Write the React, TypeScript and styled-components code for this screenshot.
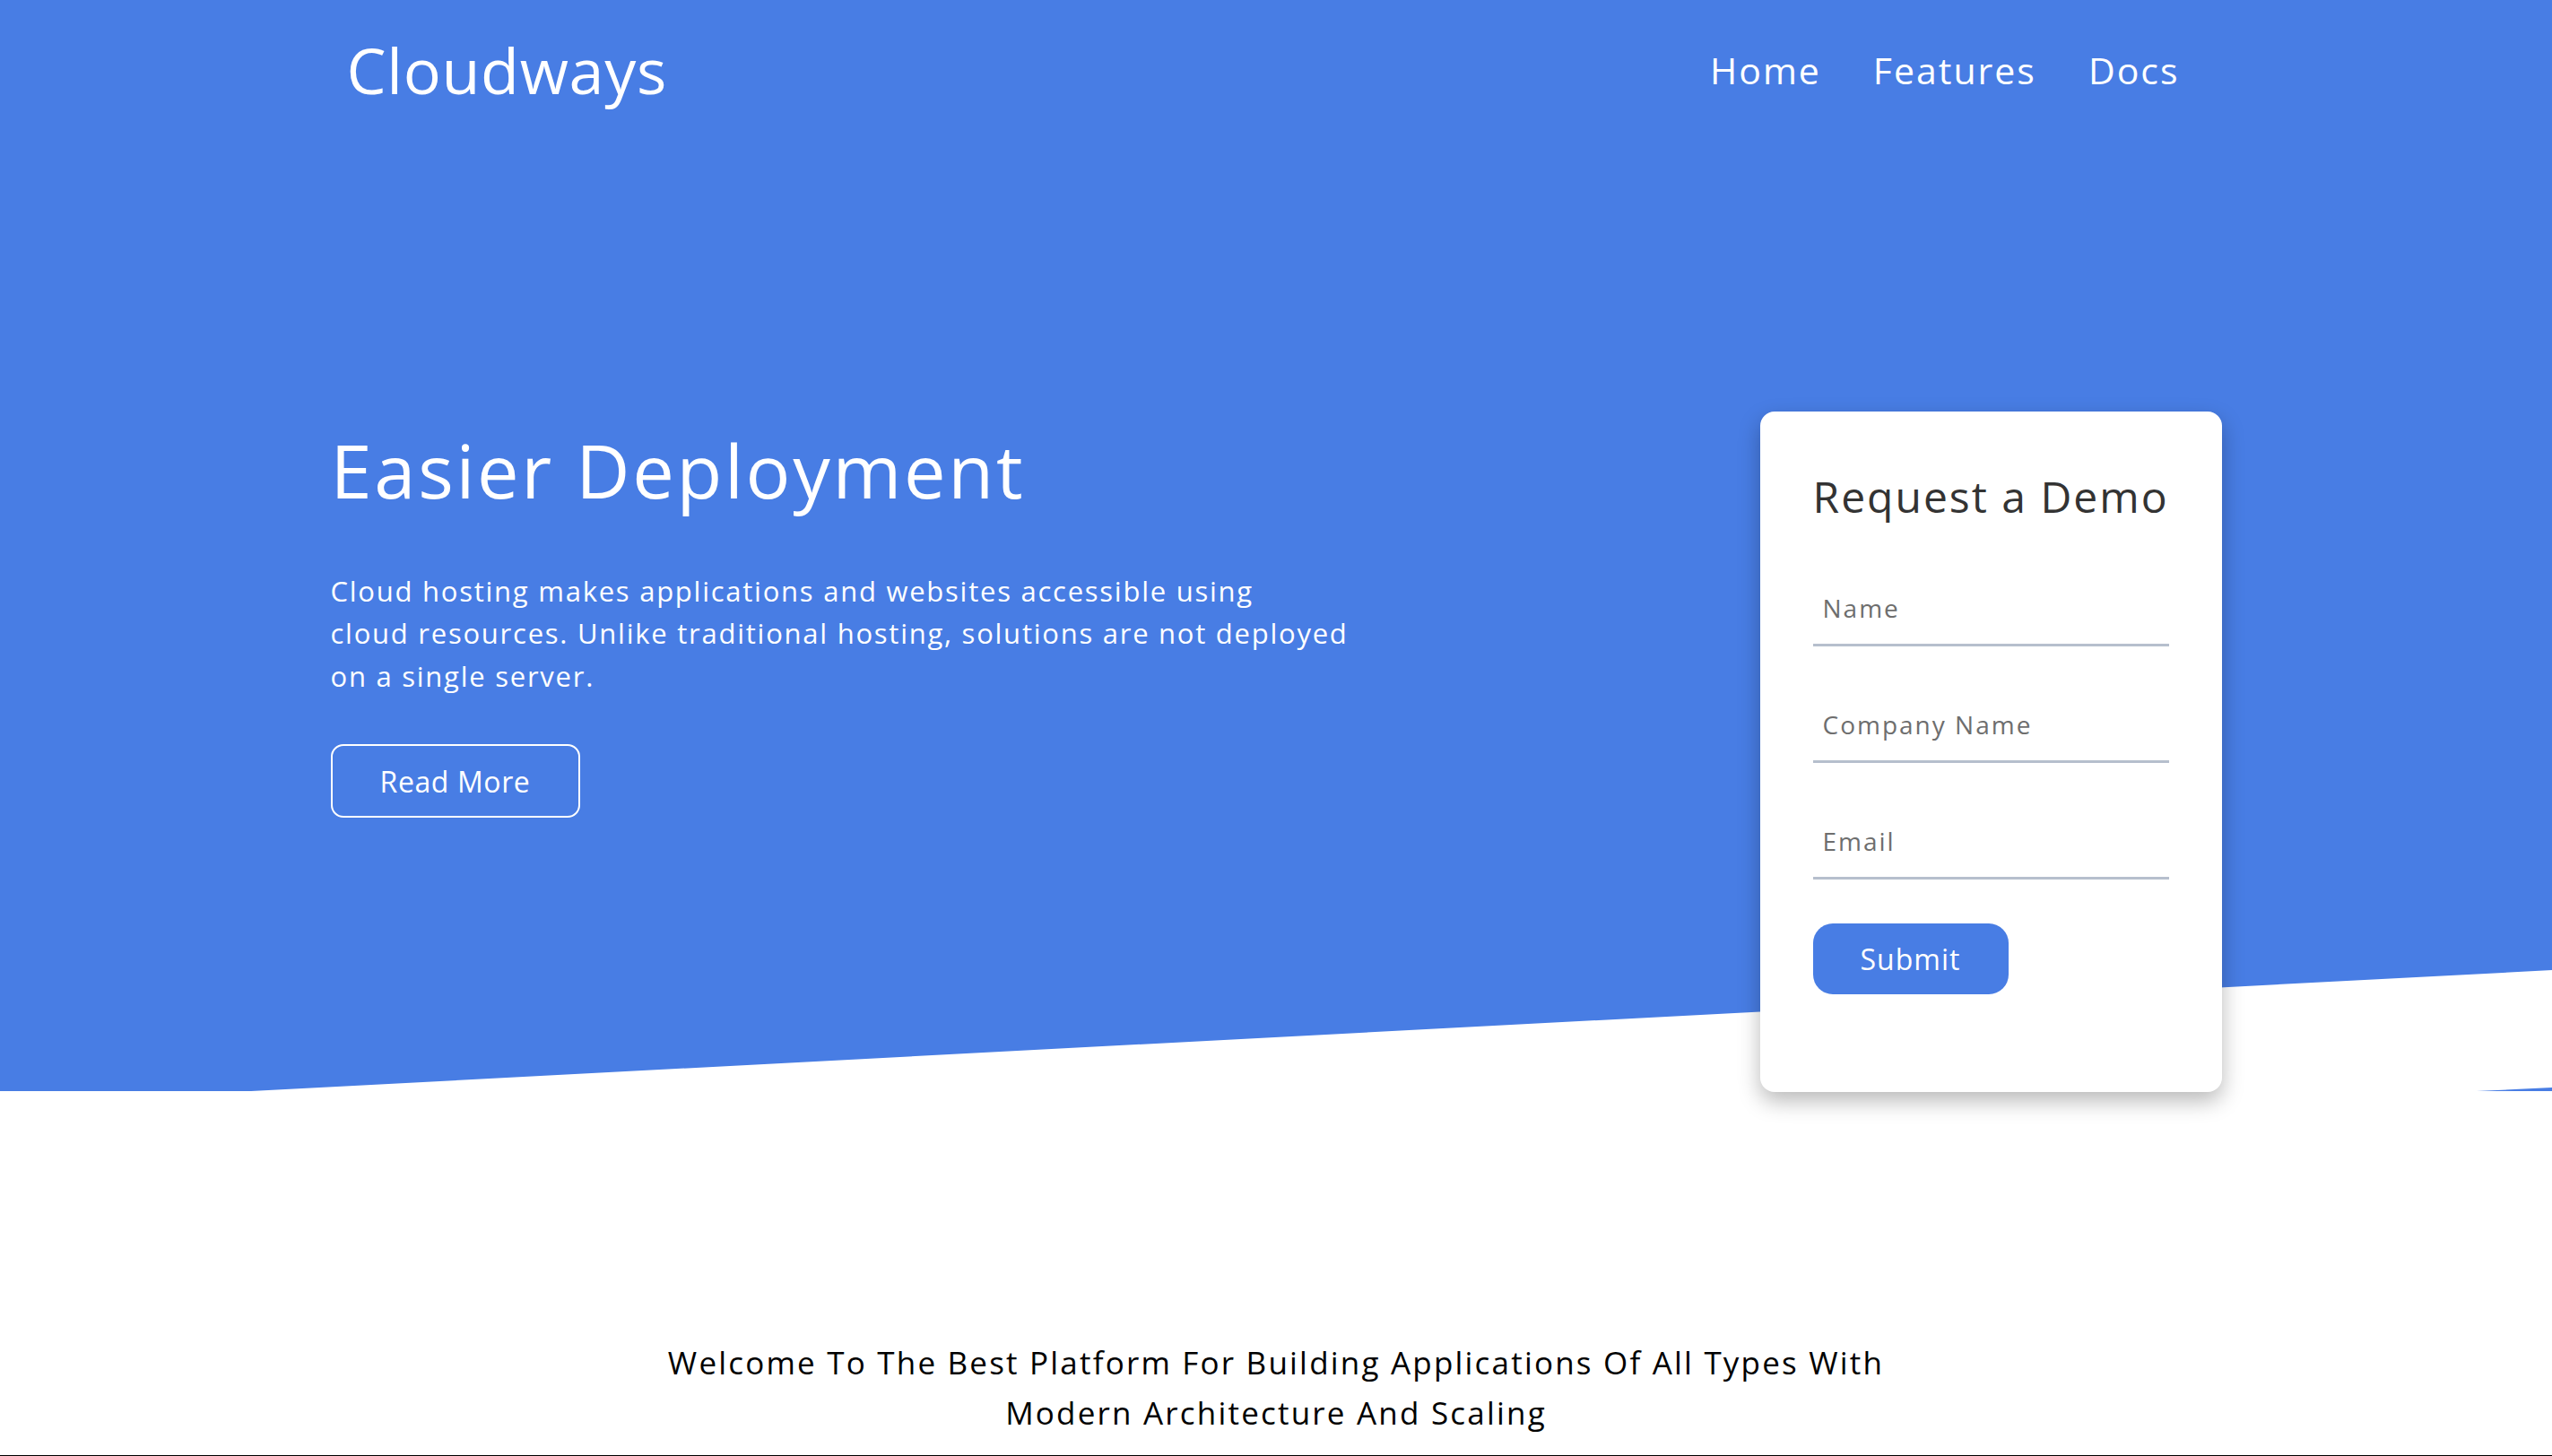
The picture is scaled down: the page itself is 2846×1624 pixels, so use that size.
import React from "react";
import styled, { createGlobalStyle } from "styled-components";

const BLUE = "#487de4";

const GlobalStyle = createGlobalStyle`
  html, body {
    margin: 0;
    padding: 0;
    background: #ffffff;
    font-family: "Open Sans", "Liberation Sans", Arial, sans-serif;
  }
  * { box-sizing: border-box; }
`;

const Hero = styled.section`
  position: relative;
  height: 1217px;
  background: ${BLUE};
  color: #ffffff;
`;

const Container = styled.div`
  width: 2109px;
  margin: 0 auto;
`;

const Nav = styled.nav`
  height: 156px;
  display: flex;
  align-items: center;
  justify-content: space-between;
  padding: 0 47px 0 18px;
`;

const Logo = styled.a`
  font-size: 70px;
  font-weight: 400;
  letter-spacing: 0.7px;
  color: #ffffff;
  text-decoration: none;
  line-height: 1;
`;

const NavLinks = styled.ul`
  display: flex;
  gap: 58px;
  list-style: none;
  margin: 0;
  padding: 0;
`;

const NavLink = styled.a`
  font-size: 41px;
  letter-spacing: 2px;
  color: #ffffff;
  text-decoration: none;
  line-height: 1;
`;

const Main = styled.div`
  display: flex;
  justify-content: space-between;
  align-items: flex-start;
`;

const Intro = styled.div`
  margin-top: 318px;
  display: flex;
  flex-direction: column;
  align-items: flex-start;
`;

const Title = styled.h1`
  margin: 0;
  font-size: 83px;
  font-weight: 400;
  line-height: 99.6px;
  letter-spacing: 2.7px;
`;

const Lead = styled.p`
  margin: 62px 0 0;
  font-size: 31px;
  line-height: 47.5px;
  letter-spacing: 1.75px;
  white-space: nowrap;
`;

const OutlineButton = styled.button`
  margin-top: 52px;
  width: 278px;
  height: 82px;
  border: 2px solid #ffffff;
  border-radius: 14px;
  background: transparent;
  color: #ffffff;
  font-family: inherit;
  font-size: 32px;
  letter-spacing: 0.6px;
  cursor: pointer;
`;

const Card = styled.form`
  position: relative;
  z-index: 1;
  margin-top: 303px;
  width: 515px;
  height: 759px;
  padding: 66px 59px 0;
  background: #ffffff;
  border-radius: 16px;
  box-shadow: 0 10px 25px rgba(0, 0, 0, 0.28);
  display: flex;
  flex-direction: column;
  align-items: flex-start;
`;

const CardTitle = styled.h2`
  margin: 0;
  font-size: 48px;
  font-weight: 400;
  line-height: 57.6px;
  letter-spacing: 2px;
  color: #333333;
  white-space: nowrap;
`;

const Field = styled.input<{ $first?: boolean }>`
  margin-top: ${(p) => (p.$first ? "55px" : "47px")};
  width: 100%;
  height: 83px;
  padding: 0 11px;
  border: none;
  border-bottom: 3px solid #b6bfcd;
  outline: none;
  background: transparent;
  font-family: inherit;
  font-size: 28px;
  letter-spacing: 2px;
  color: #333333;

  &::placeholder {
    color: #6e6e6e;
  }
`;

const SubmitButton = styled.button`
  margin-top: 49px;
  width: 218px;
  height: 79px;
  border: none;
  border-radius: 22px;
  background: ${BLUE};
  color: #ffffff;
  font-family: inherit;
  font-size: 32px;
  letter-spacing: 1px;
  cursor: pointer;
`;

const Slant = styled.svg`
  position: absolute;
  left: 0;
  bottom: 0;
  width: 100%;
  height: 140px;
  display: block;
`;

const Welcome = styled.section`
  padding-top: 275px;
  height: 407px;
  border-bottom: 1px solid #000000;
  display: flex;
  justify-content: center;
`;

const WelcomeText = styled.p`
  margin: 0;
  max-width: 1400px;
  text-align: center;
  font-size: 35px;
  line-height: 56px;
  letter-spacing: 2.2px;
  color: #000000;
`;

export default function App() {
  return (
    <>
      <GlobalStyle />
      <Hero>
        <Container>
          <Nav>
            <Logo href="#">Cloudways</Logo>
            <NavLinks>
              <li><NavLink href="#">Home</NavLink></li>
              <li><NavLink href="#">Features</NavLink></li>
              <li><NavLink href="#">Docs</NavLink></li>
            </NavLinks>
          </Nav>
          <Main>
            <Intro>
              <Title>Easier Deployment</Title>
              <Lead>
                Cloud hosting makes applications and websites accessible using
                <br />
                cloud resources. Unlike traditional hosting, solutions are not deployed
                <br />
                on a single server.
              </Lead>
              <OutlineButton type="button">Read More</OutlineButton>
            </Intro>
            <Card onSubmit={(e) => e.preventDefault()}>
              <CardTitle>Request a Demo</CardTitle>
              <Field $first placeholder="Name" />
              <Field placeholder="Company Name" />
              <Field placeholder="Email" />
              <SubmitButton type="submit">Submit</SubmitButton>
            </Card>
          </Main>
        </Container>
        <Slant viewBox="0 0 2846 140" preserveAspectRatio="none" aria-hidden="true">
          <polygon points="280,140 2846,5 2846,136 2762,140" fill="#ffffff" />
        </Slant>
      </Hero>
      <Welcome>
        <WelcomeText>
          Welcome To The Best Platform For Building Applications Of All Types
          With Modern Architecture And Scaling
        </WelcomeText>
      </Welcome>
    </>
  );
}
